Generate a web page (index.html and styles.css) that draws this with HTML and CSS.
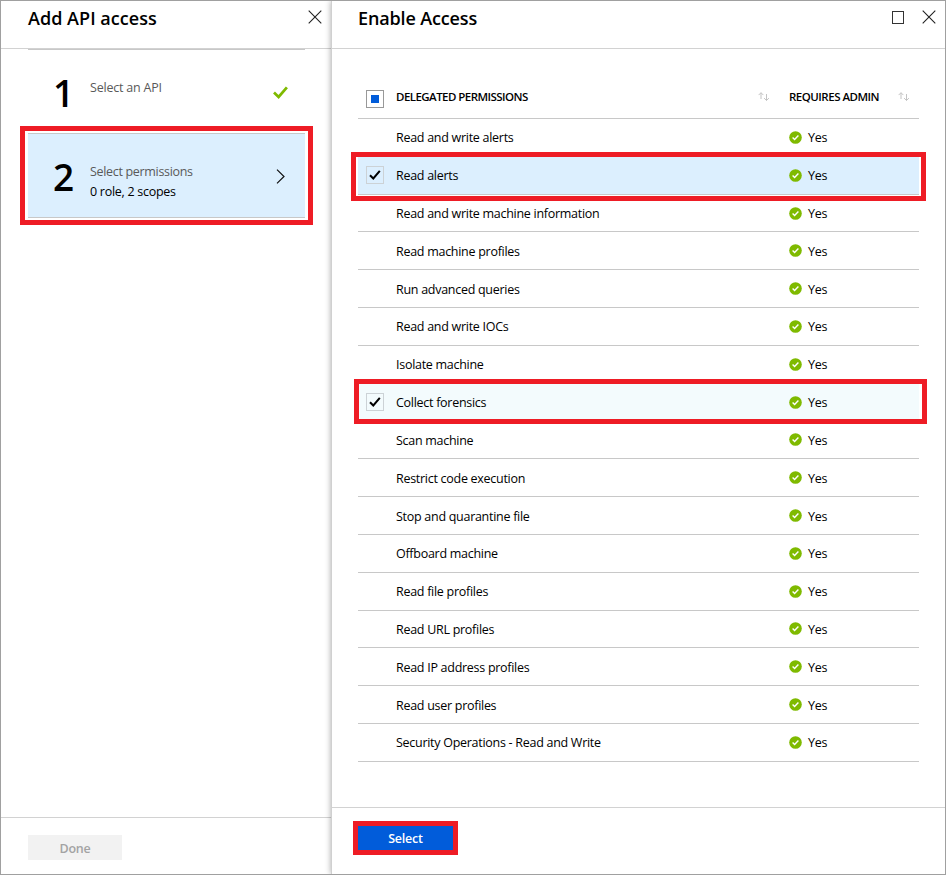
FILE: index.html
```html
<!DOCTYPE html>
<html lang="en">
<head>
<meta charset="utf-8">
<title>Enable Access</title>
<link rel="stylesheet" href="styles.css">
</head>
<body>
<svg class="defs" aria-hidden="true">
  <symbol id="ok" viewBox="0 0 13 13"><circle cx="6.5" cy="6.5" r="6.3" fill="#7fba00"/><path d="M3.6 6.6 5.6 8.6 9.4 4.6" fill="none" stroke="#fff" stroke-width="1.4"/></symbol>
  <symbol id="close" viewBox="0 0 14 14"><path d="M.7.7 13.3 13.3M13.3.7.7 13.3" fill="none" stroke="#222" stroke-width="1.1"/></symbol>
  <symbol id="sort" viewBox="0 0 12 10"><path d="M3 7V.8M.6 3.1 3 .7 5.4 3.1M8.5 2V8.5M6.1 6.1 8.5 8.5 10.9 6.1" fill="none" stroke="#c4c4c4" stroke-width="1"/></symbol>
  <symbol id="tick" viewBox="0 0 12 10"><path d="M1 5.2 4.3 8.5 10.8 .9" fill="none" stroke="#000" stroke-width="2"/></symbol>
</svg>
<div class="window">
  <section class="blade blade-api">
    <header class="blade-head"><h1 class="t-api">Add API access</h1><svg class="x"><use href="#close"/></svg></header>
    <div class="steps">
      <div class="step">
        <span class="num">1</span>
        <div class="step-text"><span class="label t-s1">Select an API</span></div>
        <svg class="done-tick" viewBox="0 0 15 13"><path d="M1 6.5 5.6 11 13.9 1.3" fill="none" stroke="#7fba00" stroke-width="2.7"/></svg>
      </div>
      <div class="step active">
        <span class="num">2</span>
        <div class="step-text"><span class="label t-s2">Select permissions</span><span class="t-sub">0 role, 2 scopes</span></div>
        <svg class="chevron" viewBox="0 0 9 15"><path d="M1 .6 8 7.5 1 14.4" fill="none" stroke="#111" stroke-width="1.2"/></svg>
        <i class="mark mark-step"></i>
      </div>
    </div>
    <footer class="foot-api"><button class="btn-done" disabled>Done</button></footer>
  </section>
  <section class="blade blade-access">
    <header class="blade-head"><h1 class="t-access">Enable Access</h1><i class="max"></i><svg class="x"><use href="#close"/></svg></header>
    <div class="grid">
      <div class="row head"><span class="box partial"></span><span class="name">DELEGATED PERMISSIONS</span><svg class="sort"><use href="#sort"/></svg><span class="admin">REQUIRES ADMIN</span><svg class="sort"><use href="#sort"/></svg></div>
      <div class="row"><span class="name">Read and write alerts</span><svg class="ok"><use href="#ok"/></svg><span class="yes">Yes</span></div>
      <div class="row selected"><span class="box"><svg><use href="#tick"/></svg></span><span class="name">Read alerts</span><svg class="ok"><use href="#ok"/></svg><span class="yes">Yes</span><i class="mark mark-alerts"></i></div>
      <div class="row"><span class="name">Read and write machine information</span><svg class="ok"><use href="#ok"/></svg><span class="yes">Yes</span></div>
      <div class="row"><span class="name">Read machine profiles</span><svg class="ok"><use href="#ok"/></svg><span class="yes">Yes</span></div>
      <div class="row"><span class="name">Run advanced queries</span><svg class="ok"><use href="#ok"/></svg><span class="yes">Yes</span></div>
      <div class="row"><span class="name">Read and write IOCs</span><svg class="ok"><use href="#ok"/></svg><span class="yes">Yes</span></div>
      <div class="row"><span class="name">Isolate machine</span><svg class="ok"><use href="#ok"/></svg><span class="yes">Yes</span></div>
      <div class="row hover"><span class="box"><svg><use href="#tick"/></svg></span><span class="name">Collect forensics</span><svg class="ok"><use href="#ok"/></svg><span class="yes">Yes</span><i class="mark mark-forensics"></i></div>
      <div class="row"><span class="name">Scan machine</span><svg class="ok"><use href="#ok"/></svg><span class="yes">Yes</span></div>
      <div class="row"><span class="name">Restrict code execution</span><svg class="ok"><use href="#ok"/></svg><span class="yes">Yes</span></div>
      <div class="row"><span class="name">Stop and quarantine file</span><svg class="ok"><use href="#ok"/></svg><span class="yes">Yes</span></div>
      <div class="row"><span class="name">Offboard machine</span><svg class="ok"><use href="#ok"/></svg><span class="yes">Yes</span></div>
      <div class="row"><span class="name">Read file profiles</span><svg class="ok"><use href="#ok"/></svg><span class="yes">Yes</span></div>
      <div class="row"><span class="name">Read URL profiles</span><svg class="ok"><use href="#ok"/></svg><span class="yes">Yes</span></div>
      <div class="row"><span class="name">Read IP address profiles</span><svg class="ok"><use href="#ok"/></svg><span class="yes">Yes</span></div>
      <div class="row"><span class="name">Read user profiles</span><svg class="ok"><use href="#ok"/></svg><span class="yes">Yes</span></div>
      <div class="row"><span class="name">Security Operations - Read and Write</span><svg class="ok"><use href="#ok"/></svg><span class="yes">Yes</span></div>
    </div>
    <footer class="foot-access"><button class="btn-select">Select</button></footer>
  </section>
</div>
</body>
</html>
```
FILE: styles.css
```css
* { box-sizing: border-box; }
body { margin: 0; background: #fff; color: #000; font: 12.5px/18px "Open Sans", "Noto Sans", sans-serif; letter-spacing: -0.28px; }
.defs { position: absolute; width: 0; height: 0; }
.window { display: flex; width: 946px; height: 875px; border: 1px solid #a0a0a0; overflow: hidden; }
.blade { display: flex; flex-direction: column; height: 100%; }
.blade-api { width: 330px; }
.blade-access { width: 614px; border-left: 1px solid #d0d0d0; box-shadow: 0 0 6px rgba(0, 0, 0, .35); }
.blade-head { display: flex; align-items: flex-start; flex: none; height: 48px; padding: 10px 9px 0 27px; border-bottom: 1px solid #d2d2d2; }
.blade-access .blade-head { padding-left: 26px; }
h1 { flex: 1; margin: -5px 0 0; font-size: 18px; line-height: 24px; font-weight: 600; }
.t-api { letter-spacing: 0.03px; }
.t-access { letter-spacing: -0.14px; }
.x { width: 14px; height: 14px; margin-top: -1px; }
.max { width: 12px; height: 13px; margin: 0 18px 0 0; border: 1px solid #333; }

.steps { flex: 1; padding: 0 26px 0 27px; }
.step { position: relative; display: flex; height: 84px; border-top: 1px solid #c8c8c8; }
.step.active { height: 85px; background: #dceffe; border-bottom: 1px solid #c8c8c8; }
.num { width: 62px; padding: 17px 0 0 25px; font-size: 37px; line-height: 52px; font-weight: 600; letter-spacing: 0; }
.step-text { display: flex; flex-direction: column; flex: 1; padding-top: 28px; line-height: 20px; }
.label { color: #595959; }
.t-s1 { letter-spacing: -0.2px; }
.t-s2 { letter-spacing: -0.32px; }
.done-tick { width: 15px; height: 13px; margin: 36px 17px 0 0; }
.chevron { width: 9px; height: 15px; margin: 35px 20px 0 0; }

.mark { position: absolute; border: 5px solid #ee1c25; }
.mark-step { inset: -8px -8px -8px -8px; }
.mark-alerts { left: -7px; right: -7px; top: -5px; height: 49px; z-index: 1; }
.mark-forensics { left: -4px; right: -8px; top: -5px; height: 45px; z-index: 1; }

.foot-api { flex: none; height: 57px; padding: 17px 27px; border-top: 1px solid #d2d2d2; }
.foot-access { flex: none; height: 67px; padding: 13px 21px; border-top: 1px solid #d2d2d2; }
button { display: block; font: 600 12.5px/16px "Open Sans", "Noto Sans", sans-serif; letter-spacing: -0.2px; }
.btn-done { width: 94px; height: 25px; padding: 3px 0 0; border: 0; background: #f2f2f2; color: #a3a3a3; }
.btn-select { width: 105px; height: 34px; padding: 2px 0 0; border: 5px solid #ee1c25; background: #015cda; color: #fff; }

.grid { flex: 1; width: 561px; margin-left: 26px; padding-top: 32px; }
.row { position: relative; display: flex; align-items: center; height: 37.82px; border-bottom: 1px solid #c8c8c8; padding-left: 38px; }
.row.head { height: 38px; font-size: 11.5px; font-weight: 600; letter-spacing: -0.55px; padding-bottom: 5px; }
.name { width: 393px; }
.row:not(.head) .name, .yes { padding-top: 2px; }
.head .name { width: 362px; }
.admin { width: 109px; margin-left: 19px; letter-spacing: -0.5px; }
.sort { width: 12px; height: 10px; margin-top: -1px; }
.ok { width: 13px; height: 13px; margin-right: 6px; }
.selected { background: #dceffe; }
.hover { background: linear-gradient(90deg, #fff 1px, #f3fbfd 1px); }
.box { display: flex; align-items: center; justify-content: center; width: 18px; height: 18px; margin: 0 12px 0 -30px; border: 1px solid #ccd2d6; }
.box svg { width: 12px; height: 10px; }
.box.partial { margin-top: 4px; border-color: #999; background: #fff; }
.partial::before { content: ""; width: 8px; height: 8px; background: #015cda; }
```
